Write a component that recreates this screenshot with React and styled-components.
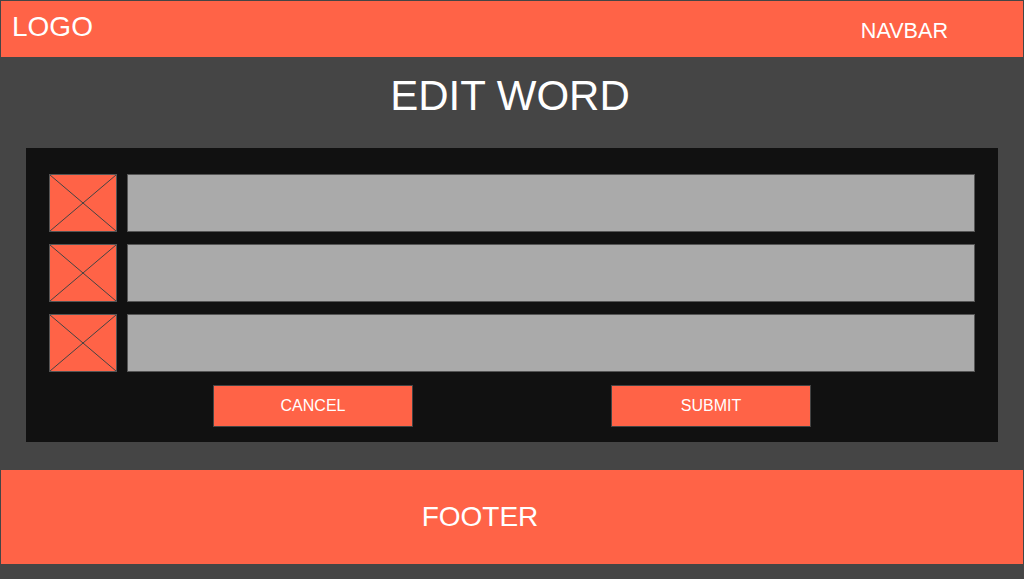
import React from 'react';
import styled, { createGlobalStyle } from 'styled-components';

const GlobalStyle = createGlobalStyle`
  html, body {
    margin: 0;
    padding: 0;
    background-color: #454545;
  }
  body {
    font-family: "Liberation Sans", Arial, sans-serif;
    color: white;
  }
`;

const words = [1, 2, 3];

const App = () => {
  return <Page>
      <GlobalStyle />
      <Navbar>
        <Logo>LOGO</Logo>
        <NavLinks>NAVBAR</NavLinks>
      </Navbar>
      <Title>EDIT WORD</Title>
      <Panel>
        {words.map((w) => (
          <Row key={w}>
            <ImageBox>
              <svg width="100%" height="100%" viewBox="0 0 66 56" preserveAspectRatio="none">
                <line x1="0" y1="0" x2="66" y2="56" stroke="#444" strokeWidth="1" />
                <line x1="66" y1="0" x2="0" y2="56" stroke="#444" strokeWidth="1" />
              </svg>
            </ImageBox>
            <Field type="text" />
          </Row>
        ))}
        <Buttons>
          <Button>CANCEL</Button>
          <Button>SUBMIT</Button>
        </Buttons>
      </Panel>
      <Footer>FOOTER</Footer>
  </Page>;
};

const Page = styled.div`
  width: 1024px;
  height: 579px;
  box-sizing: border-box;
  padding: 1px 1px 0 1px;
  display: flex;
  flex-direction: column;
  overflow: hidden;
`;

const Navbar = styled.header`
  height: 56px;
  background-color: #ff6347;
  display: flex;
  justify-content: space-between;
  align-items: flex-start;
  padding: 0 75px 0 11px;
`;

const Logo = styled.div`
  font-size: 28px;
  margin-top: 10px;
`;

const NavLinks = styled.nav`
  font-size: 21.6px;
  margin-top: 17px;
`;

const Title = styled.h1`
  margin: 15px 0 0 0;
  font-size: 42px;
  font-weight: 400;
  line-height: 48px;
  text-align: center;
  padding-right: 4px;
`;

const Panel = styled.section`
  margin: 28px 25px 0 25px;
  height: 294px;
  box-sizing: border-box;
  background-color: #111111;
  padding: 26px 23px 0 23px;
  display: flex;
  flex-direction: column;
  gap: 12px;
`;

const Row = styled.div`
  display: flex;
  gap: 10px;
  height: 58px;
`;

const ImageBox = styled.div`
  width: 68px;
  height: 58px;
  box-sizing: border-box;
  border: 1px solid #555;
  background-color: #ff6347;
  flex-shrink: 0;

  svg{
    display: block;
  }
`;

const Field = styled.input`
  flex: 1;
  height: 58px;
  box-sizing: border-box;
  border: 1px solid #555;
  background-color: #aaaaaa;
  margin: 0;
  padding: 0 8px;
  outline: none;
`;

const Buttons = styled.div`
  display: flex;
  justify-content: center;
  gap: 198px;
  margin-top: 1px;
`;

const Button = styled.button`
  width: 200px;
  height: 42px;
  box-sizing: border-box;
  border: 1px solid #444;
  background-color: #ff6347;
  color: white;
  font-family: "Liberation Sans", Arial, sans-serif;
  font-size: 16px;
  padding: 0;
  cursor: pointer;
`;

const Footer = styled.footer`
  margin-top: 28px;
  height: 94px;
  background-color: #ff6347;
  display: flex;
  align-items: center;
  justify-content: center;
  font-size: 28px;
  padding-right: 64px;
`;

export default App;
